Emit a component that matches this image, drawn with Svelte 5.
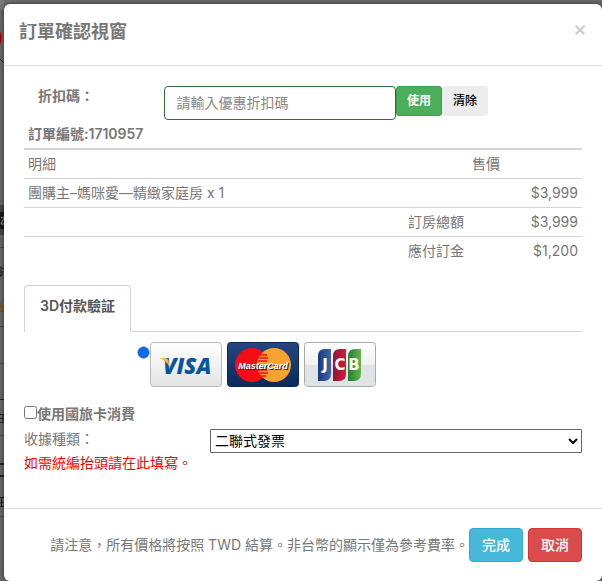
<script>
  const items = [{ name: '團購主–媽咪愛––精緻家庭房 x 1', price: '$3,999' }];

  const totals = [
    { label: '訂房總額', amount: '$3,999' },
    { label: '應付訂金', amount: '$1,200' }
  ];

  let open = $state(true);
  let coupon = $state('');
  let useTravelCard = $state(false);
  let receipt = $state('double');

  function close() {
    open = false;
  }
</script>

<div class="page">
  <!-- Edge of the booking page behind the dialog -->
  <svg class="behind" width="4" height="581" viewBox="0 0 4 581" aria-hidden="true">
    <rect width="4" height="581" fill="#686765" />
    <rect width="4" height="10" fill="#767676" />
    <path d="M0 31Q3 38 0 45Z" fill="#a00000" />
    <path d="M0 59L4 63" stroke="#333" />
    <rect y="205" width="4" height="7" fill="#444" />
    <rect y="212" width="4" height="17" fill="#1c1c1c" />
    <path d="M1 218Q4 216 4 218L1 224H4" fill="none" stroke="#999" />
    <rect y="229" width="4" height="6" fill="#444" />
    <path d="M0 247.500H4M0 326.500H4M0 363.500H4M0 435.500H4M0 516.500H4" stroke="#4c4b49" />
    <path d="M0 267L4 269M0 272H4M1 268V277M0 276L3 274" stroke="#222" />
    <path d="M0 303L2 309M0 311H4" stroke="#805410" stroke-width="2" />
    <path d="M0 399.500H4M0 414.500H4M0 418.500H4M0 422.500H4M3 414V422" stroke="#222" />
    <path d="M0 464H4M0 476H4" stroke="#222" stroke-width="2" />
    <path d="M0 497.500H4M0 502.500H4M0 506.500H4M1.500 497V506" stroke="#222" />
  </svg>

  {#if open}
    <div class="modal" role="dialog" aria-labelledby="modal-title">
      <header class="modal-header">
        <h4 id="modal-title">訂單確認視窗</h4>
        <button type="button" class="close" aria-label="Close" onclick={close}>×</button>
      </header>

      <div class="modal-body">
        <div class="coupon">
          <label for="coupon">折扣碼：</label>
          <input id="coupon" type="text" placeholder="請輸入優惠折扣碼" bind:value={coupon} />
          <div class="coupon-actions">
            <button type="button" class="btn btn-sm btn-success">使用</button>
            <button type="button" class="btn btn-sm btn-default" onclick={() => (coupon = '')}>清除</button>
          </div>
        </div>

        <table>
          <caption>訂單編號:1710957</caption>
          <thead>
            <tr>
              <th colspan="2">明細</th>
              <th class="price-head">售價</th>
            </tr>
          </thead>
          <tbody>
            {#each items as item}
              <tr>
                <td colspan="2">{item.name}</td>
                <td class="amount">{item.price}</td>
              </tr>
            {/each}
            {#each totals as total}
              <tr>
                <td colspan="2" class="amount">{total.label}</td>
                <td class="amount">{total.amount}</td>
              </tr>
            {/each}
          </tbody>
        </table>

        <div class="tabs" role="tablist">
          <button type="button" class="tab" role="tab" aria-selected="true">3D付款驗証</button>
        </div>

        <div class="payment">
          <input type="radio" id="pay-card" name="payment" value="card" checked />
          <label for="pay-card" class="cards" aria-label="VISA, MasterCard, JCB">
            <svg width="72" height="45" viewBox="0 0 72 45">
              <defs>
                <linearGradient id="silver" x2="0" y2="1">
                  <stop offset="0" stop-color="#fff" />
                  <stop offset="1" stop-color="#e4e4e4" />
                </linearGradient>
              </defs>
              <rect x=".5" y=".5" width="71" height="44" rx="3" fill="url(#silver)" stroke="#bbb" />
              <text x="13" y="32" class="visa">VISA</text>
              <path d="M9 16H15Q18 16 18.500 19L19.500 25Q16 18 9 16Z" fill="#f9b233" />
            </svg>

            <svg width="72" height="45" viewBox="0 0 72 45">
              <defs>
                <linearGradient id="navy" x2="0" y2="1">
                  <stop offset="0" stop-color="#25477f" />
                  <stop offset="1" stop-color="#0a2a5e" />
                </linearGradient>
              </defs>
              <rect x=".5" y=".5" width="71" height="44" rx="3" fill="url(#navy)" stroke="#08295c" />
              <circle cx="25" cy="23" r="17" fill="#f20d17" />
              <circle cx="47" cy="23" r="17" fill="#f9a232" />
              <path d="M33 13H40M32 16H41M31 19H40M31 28H40M32 31H41M33 34H39" stroke="#f20d17" stroke-width="1.500" />
              <text x="37" y="28" class="mc mc-shadow">MasterCard</text>
              <text x="36" y="27" class="mc">MasterCard</text>
            </svg>

            <svg width="72" height="45" viewBox="0 0 72 45">
              <defs>
                <linearGradient id="jcb-blue"><stop stop-color="#173a7c" /><stop offset="1" stop-color="#3c66ad" /></linearGradient>
                <linearGradient id="jcb-red"><stop stop-color="#8c1738" /><stop offset="1" stop-color="#d61b3b" /></linearGradient>
                <linearGradient id="jcb-green"><stop stop-color="#2a7d34" /><stop offset="1" stop-color="#62b64a" /></linearGradient>
              </defs>
              <rect x=".5" y=".5" width="71" height="44" rx="3" fill="url(#silver)" stroke="#aaa" />
              <path d="M1 23H71V42Q71 44 69 44H3Q1 44 1 42Z" fill="#dfe3e5" />
              <path d="M14 14Q14 7 21 7H27V32Q27 39 20 39H14Z" fill="url(#jcb-blue)" />
              <path d="M29 14Q29 7 36 7H42V32Q42 39 35 39H29Z" fill="url(#jcb-red)" />
              <path d="M44 14Q44 7 51 7H57V32Q57 39 50 39H44Z" fill="url(#jcb-green)" />
              <text x="21" y="28" class="jcb">J</text>
              <text x="36" y="28" class="jcb">C</text>
              <text x="50" y="28" class="jcb">B</text>
            </svg>
          </label>
        </div>

        <div class="travel-card">
          <input type="checkbox" id="travel-card" bind:checked={useTravelCard} />
          <label for="travel-card">使用國旅卡消費</label>
        </div>

        <div class="receipt">
          <label for="receipt">收據種類：</label>
          <select id="receipt" bind:value={receipt}>
            <option value="double">二聯式發票</option>
            <option value="triple">三聯式發票</option>
          </select>
        </div>
        <p class="hint">如需統編抬頭請在此填寫。</p>
      </div>

      <footer class="modal-footer">
        <span>請注意，所有價格將按照 TWD 結算。非台幣的顯示僅為參考費率。</span>
        <button type="button" class="btn btn-info">完成</button>
        <button type="button" class="btn btn-danger" onclick={close}>取消</button>
      </footer>
    </div>
  {/if}
</div>

<style>
  :global(body) {
    background: #6c6b6a;
  }

  .page,
  .page :global(*) {
    box-sizing: border-box;
  }

  .page {
    position: relative;
    min-height: 100vh;
    padding: 4px 0 0 4px;
    overflow: hidden;
    background: #6c6b6a;
    color: #777;
    font-family: Inter, 'Noto Sans CJK TC', sans-serif;
    font-size: 14px;
    font-variant-ligatures: none;
    line-height: 20px;
  }

  .behind {
    position: absolute;
    top: 0;
    left: 0;
  }

  .modal {
    position: relative;
    background: #fff;
    border-radius: 6px;
    box-shadow: 0 0 4px rgba(0, 0, 0, 0.6);
  }

  button,
  input,
  select {
    font-family: inherit;
    font-size: 14px;
  }

  .modal-header {
    display: flex;
    justify-content: space-between;
    align-items: flex-start;
    padding: 15px 15px 20px;
    border-bottom: 1px solid #ddd;
  }

  h4 {
    margin: 0;
    font-size: 18px;
    font-weight: 700;
    line-height: 26px;
  }

  .close {
    padding: 0;
    border: none;
    background: none;
    color: #ccc;
    font-size: 21px;
    font-weight: 500;
    line-height: 20px;
    cursor: pointer;
  }

  .modal-body {
    padding: 20px 20px 35px;
  }

  .coupon {
    display: grid;
    grid-template-columns: 3fr 5fr 4fr;
    align-items: start;
  }

  .coupon label {
    padding-left: 14px;
    font-weight: 700;
  }

  .coupon input {
    width: 100%;
    height: 34px;
    padding: 5px 12px 7px;
    border: 1px solid #2b6e38;
    border-radius: 4px;
    color: #555;
  }

  .coupon input::placeholder {
    color: #888;
  }

  .coupon-actions {
    display: flex;
  }

  .btn {
    padding: 6px 12px;
    border: 1px solid transparent;
    border-radius: 4px;
    font-weight: 500;
    line-height: 20px;
    color: #fff;
    cursor: pointer;
  }

  .btn-sm {
    padding: 5px 10px;
    border-radius: 3px;
    font-size: 12px;
    line-height: 18px;
  }

  .btn-success {
    background: #4bae5a;
    border-color: #38a149;
    font-weight: 700;
  }

  .btn-default {
    background: #ececec;
    color: #000;
  }

  .btn-info {
    background: #46b8da;
    border-color: #2fadd3;
  }

  .btn-danger {
    background: #dc4b4b;
    border-color: #d63434;
  }

  table {
    width: 100%;
    border-collapse: separate;
    border-spacing: 0;
  }

  caption {
    padding: 4px;
    font-weight: 600;
    text-align: left;
  }

  th,
  td {
    padding: 4px;
    border-top: 1px solid #d5d5d5;
    text-align: left;
    font-weight: 400;
  }

  th {
    border-top-width: 2px;
  }

  .price-head {
    width: 114px;
  }

  .amount {
    text-align: right;
  }

  .tabs {
    display: flex;
    margin-top: 20px;
    border-bottom: 1px solid #d5d5d5;
  }

  .tab {
    margin-bottom: -1px;
    padding: 10px 15px 15px;
    border: 1px solid #d5d5d5;
    border-bottom-color: #fff;
    border-radius: 4px 4px 0 0;
    background: #fff;
    color: #555;
    font-weight: 600;
    line-height: 20px;
  }

  .payment {
    display: flex;
    align-items: flex-start;
    padding: 10px 0 0 113px;
  }

  .payment input {
    appearance: none;
    width: 13px;
    height: 13px;
    margin: 4px 0 0;
    border: 1px solid #a9c4e6;
    border-radius: 50%;
    background: #0a6df5;
    box-shadow: inset 0 0 0 1px #1459b8;
  }

  .cards {
    display: flex;
    gap: 5px;
  }

  .visa {
    fill: #0a559b;
    font-family: 'Open Sans', sans-serif;
    font-size: 22px;
    font-style: italic;
    font-weight: 800;
  }

  .mc {
    fill: #fff;
    font-family: 'Liberation Sans', sans-serif;
    font-size: 9px;
    font-style: italic;
    font-weight: 700;
    text-anchor: middle;
  }

  .mc-shadow {
    fill: #14244f;
  }

  .jcb {
    fill: #fff;
    font-family: 'DejaVu Sans', sans-serif;
    font-size: 15px;
    font-weight: 700;
    text-anchor: middle;
  }

  .travel-card {
    display: flex;
    align-items: flex-start;
    margin-top: 17px;
    font-weight: 700;
  }

  .travel-card input {
    width: 13px;
    height: 13px;
    margin: 2px 0 0;
  }

  .receipt {
    display: grid;
    grid-template-columns: 1fr 2fr;
    margin-top: 5px;
  }

  select {
    height: 24px;
    padding-bottom: 2px;
    border: 1px solid #666;
    border-radius: 1px;
    background: #fff;
    color: #000;
  }

  .hint {
    margin: 0;
    color: #f00;
  }

  .modal-footer {
    display: flex;
    align-items: center;
    justify-content: flex-end;
    padding: 19px 20px;
    border-top: 1px solid #ddd;
  }

  .btn-info {
    margin-right: 5px;
  }
</style>
